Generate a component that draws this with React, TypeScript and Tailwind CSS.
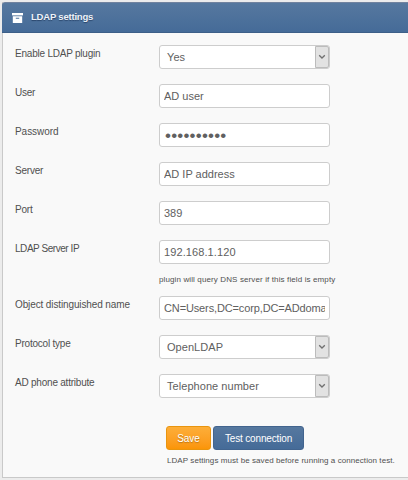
import React, { useState } from "react";

type TFieldProps = {
  label: string;
  children: React.ReactNode;
  hint?: string;
  labelClass?: string;
};

function Field({
  label,
  children,
  hint,
  labelClass = "tracking-[-0.22px]",
}: TFieldProps) {
  return (
    <div className={hint ? "h-[56px]" : "h-[39px]"}>
      <div className="flex">
        <label
          className={`w-[144px] shrink-0 pt-[3px] text-[10px] leading-[12px] text-[#505050] ${labelClass}`}
        >
          {label}
        </label>
        {children}
      </div>
      {hint && (
        <p className="ml-[144px] mt-[11px] whitespace-nowrap text-[8px] leading-[10px] tracking-[0.12px] text-[#505050]">
          {hint}
        </p>
      )}
    </div>
  );
}

type TInputProps = {
  value: string;
  type?: string;
  className?: string;
};

function Input({
  value,
  type = "text",
  className = "px-1 text-[11px]",
}: TInputProps) {
  const [text, setText] = useState(value);

  return (
    <input
      type={type}
      value={text}
      onChange={(e) => setText(e.target.value)}
      className={`h-6 w-[171px] rounded-[3px] border border-[#cdcdcd] bg-white text-[#606060] outline-none ${className}`}
    />
  );
}

function Select({ value }: { value: string }) {
  return (
    <button
      type="button"
      className="flex h-6 w-[171px] items-center justify-between rounded-[3px] border border-[#cdcdcd] bg-white pl-[7px] text-[11px] tracking-[0.05px] text-[#606060]"
    >
      <span>{value}</span>
      <span className="flex h-[22px] w-[14px] items-center justify-center rounded-r-[2px] border border-[#bcbcbc] bg-[#e2e2e2]">
        <svg width="8" height="6" viewBox="0 0 8 6" fill="none">
          <path d="M1.2 1.2 4 4l2.8-2.8" stroke="#707070" strokeWidth="1.3" />
        </svg>
      </span>
    </button>
  );
}

function App() {
  return (
    <div className="h-[480px] w-[408px] overflow-hidden bg-[#ececec] pl-[2px] pt-[2px] font-['Liberation_Sans',Arial,sans-serif]">
      <div className="h-[476px] border-b border-l border-[#c9c9c9] bg-[#f9f9f9]">
        <div className="-ml-px flex h-[31px] items-center rounded-tl-[3px] border-b border-t border-b-[#3d5f88] border-t-[#71839f] bg-linear-to-b from-[#56789f] to-[#456b98] pl-[10px]">
          <svg width="11" height="10" viewBox="0 0 11 10" fill="white">
            <path d="M0 0h11v2.4H0z" />
            <path
              fillRule="evenodd"
              d="M.8 3.2h9.4V10H.8zM3.8 4.7v1.1h3.4V4.7z"
            />
          </svg>
          <h1 className="ml-[8px] text-[9.5px] font-bold tracking-[-0.2px] text-[#eef3f9] [text-shadow:0_1px_1px_#29456b]">
            LDAP settings
          </h1>
        </div>

        <form className="pl-3 pt-[12px]">
          <Field label="Enable LDAP plugin">
            <Select value="Yes" />
          </Field>
          <Field label="User">
            <Input value="AD user" />
          </Field>
          <Field label="Password" labelClass="tracking-[-0.05px]">
            <Input
              type="password"
              value="password12"
              className="pl-[5px] pt-[2px] text-[17px] tracking-[0.2px]"
            />
          </Field>
          <Field label="Server">
            <Input value="AD IP address" />
          </Field>
          <Field label="Port">
            <Input value="389" />
          </Field>
          <Field
            label="LDAP Server IP"
            labelClass="tracking-[-0.45px]"
            hint="plugin will query DNS server if this field is empty"
          >
            <Input
              value="192.168.1.120"
              className="px-1 text-[11px] tracking-[0.1px]"
            />
          </Field>
          <Field
            label="Object distinguished name"
            labelClass="tracking-[-0.12px]"
          >
            <Input
              value="CN=Users,DC=corp,DC=ADdomain"
              className="px-1 text-[11px] tracking-[-0.13px]"
            />
          </Field>
          <Field label="Protocol type">
            <Select value="OpenLDAP" />
          </Field>
          <Field label="AD phone attribute">
            <Select value="Telephone number" />
          </Field>

          <div className="ml-[151px] mt-[13px]">
            <div className="flex gap-[2px]">
              <button
                type="button"
                className="h-6 w-[45px] rounded-[3px] border border-[#e9950f] bg-linear-to-b from-[#fdae38] to-[#fb9505] text-[10px] tracking-[-0.1px] text-white [text-shadow:0_1px_1px_#b87514]"
              >
                Save
              </button>
              <button
                type="button"
                className="h-6 w-[91px] rounded-[3px] border border-[#42648e] bg-linear-to-b from-[#56789f] to-[#456b98] text-[10px] tracking-[-0.15px] text-white"
              >
                Test connection
              </button>
            </div>
            <p className="ml-px mt-[6px] whitespace-nowrap text-[8px] leading-[10px] tracking-[0.07px] text-[#505050]">
              LDAP settings must be saved before running a connection test.
            </p>
          </div>
        </form>
      </div>
    </div>
  );
}

export default App;
